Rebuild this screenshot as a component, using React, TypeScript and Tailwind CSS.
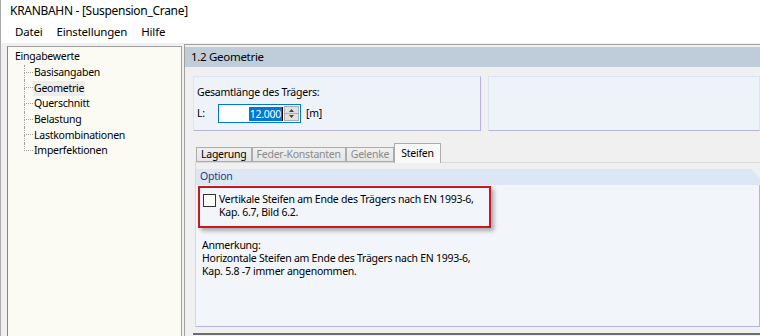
import { useState } from 'react';

const treeItems = ['Basisangaben', 'Geometrie', 'Querschnitt', 'Belastung', 'Lastkombinationen', 'Imperfektionen'];

function TreeRow({ label, last, selected }: { label: string; last: boolean; selected: boolean }) {
  return (
    <div className="flex h-[15.7px] items-stretch">
      <div className="ml-[16px] flex w-[9px] flex-col">
        <div className="h-1/2 border-b border-l border-dotted border-[#a0a0a0]" />
        <div className={last ? 'h-1/2' : 'h-1/2 border-l border-dotted border-[#a0a0a0]'} />
      </div>
      <div className="flex items-center">
        <span className={selected ? 'bg-[#ececec] px-[1px] leading-[15px]' : 'px-[1px] leading-[15px]'}>{label}</span>
      </div>
    </div>
  );
}

function Tab({ label, active, disabled }: { label: string; active?: boolean; disabled?: boolean }) {
  if (active) {
    return (
      <div className="relative z-10 -mb-px flex h-[20px] items-center border border-b-0 border-[#acacac] bg-[#f9f9f9] px-[6px]">
        {label}
      </div>
    );
  }
  return (
    <div
      className={
        'flex h-[15px] items-center border border-[#acacac] bg-gradient-to-b from-[#f0f0f0] to-[#e5e5e5] px-[4px] ' +
        (disabled ? 'text-[#8a8a8a]' : 'text-black')
      }
    >
      {label}
    </div>
  );
}

export default function App() {
  const [checked, setChecked] = useState(false);

  return (
    <div className="flex h-[336px] w-[760px] flex-col overflow-hidden border-l border-[#a9a9a9] bg-[#f0f0f0] font-['Noto_Sans',sans-serif] text-[10.5px] tracking-[-0.25px] text-black">
      <div className="flex h-[21px] items-center bg-white pl-[9px] text-[12px] tracking-[-0.3px]">KRANBAHN - [Suspension_Crane]</div>
      <div className="flex h-[22px] items-center gap-[14px] bg-white pl-[14px] text-[11.5px] tracking-[-0.2px]">
        <span>Datei</span>
        <span>Einstellungen</span>
        <span>Hilfe</span>
      </div>

      <div className="flex min-h-0 flex-1 pt-[1px]">
        {/* Navigator */}
        <div className="ml-[6px] mt-[2px] flex w-[175px] flex-col border-l border-r border-t border-l-[#5b8fc0] border-r-[#a0a0a0] border-t-[#a0a0a0] bg-[#fbfbf3] pt-[2px]">
          <div className="flex h-[15.7px] items-center pl-[7px]">Eingabewerte</div>
          {treeItems.map((t, i) => (
            <TreeRow key={t} label={t} last={i === treeItems.length - 1} selected={t === 'Geometrie'} />
          ))}
        </div>

        {/* Main panel */}
        <div className="ml-[2px] flex min-w-0 flex-1 flex-col border-l border-t border-[#a0a0a0]">
          <div className="mt-[2px] flex h-[20px] items-center bg-[#bfcddb] pl-[6px] text-[11.5px] tracking-[-0.3px]">1.2 Geometrie</div>

          <div className="flex gap-[7px] pl-[8px] pt-[9px]">
            <div className="flex h-[55px] w-[288px] flex-col border border-[#dce3f4] border-b-[#b4b4e8] border-r-[#b4b4e8] bg-[#eef2f9] pl-[3px] pt-[8px]">
              <div className="leading-[14px]">Gesamtlänge des Trägers:</div>
              <div className="mt-[5px] flex items-center">
                <span className="w-[21px]">L:</span>
                <div className="flex h-[19px] w-[83px] items-center border border-[#0078d7] bg-white pr-[1px]">
                  <div className="flex flex-1 justify-end">
                    <span className="bg-[#0078d7] px-[1px] leading-[14px] text-white">12.000</span>
                    <span className="w-px bg-black" />
                  </div>
                  <div className="ml-[1px] flex h-[15px] w-[15px] flex-col border border-[#adadad] bg-[#e1e1e1]">
                    <svg viewBox="0 0 13 6" className="h-[6.5px] w-[13px]">
                      <path d="M4 5 L6.5 2 L9 5 Z" fill="#404040" />
                    </svg>
                    <div className="h-px bg-[#adadad]" />
                    <svg viewBox="0 0 13 6" className="h-[6.5px] w-[13px]">
                      <path d="M4 1 L6.5 4 L9 1 Z" fill="#404040" />
                    </svg>
                  </div>
                </div>
                <span className="ml-[5px]">[m]</span>
              </div>
            </div>
            <div className="h-[55px] flex-1 border border-[#dce3f4] border-b-[#b4b4e8] bg-[#eef2f9]" />
          </div>

          {/* Tabs */}
          <div className="mt-[12px] flex items-end pl-[11px]">
            <Tab label="Lagerung" />
            <Tab label="Feder-Konstanten" disabled />
            <Tab label="Gelenke" disabled />
            <Tab label="Steifen" active />
          </div>

          <div className="ml-[10px] flex h-[165px] flex-col border-l border-t border-[#d9d9d9] pt-[6px]">
            <div className="flex h-[16px] items-center bg-[#dce6f4] pl-[4px] text-[#1f3f78] [clip-path:polygon(0_0,calc(100%-9px)_0,100%_9px,100%_100%,0_100%)]">
              Option
            </div>
            <div className="flex flex-1 flex-col border-b border-r border-[#b4b4e8] bg-[#f2f5fa] pl-[2px] pt-[1px]">
              <div className="flex h-[42px] w-[293px] items-start border-2 border-[#c8191f] pl-[3px] pt-[5px] shadow-[3px_3px_4px_rgba(0,0,0,0.3)]">
                <button
                  type="button"
                  onClick={() => setChecked(!checked)}
                  className="mt-[1px] flex h-[13px] w-[13px] shrink-0 items-center justify-center border border-[#333333] bg-white"
                >
                  {checked && (
                    <svg viewBox="0 0 10 10" className="h-[9px] w-[9px]">
                      <path d="M1.5 5 L4 7.5 L8.5 2" stroke="#000" strokeWidth="1.5" fill="none" />
                    </svg>
                  )}
                </button>
                <div className="ml-[3px] whitespace-nowrap leading-[13px]">
                  Vertikale Steifen am Ende des Trägers nach EN 1993-6,
                  <br />
                  Kap. 6.7, Bild 6.2.
                </div>
              </div>
              <div className="mt-[11px] whitespace-nowrap pl-[4px] leading-[13px]">
                <div>Anmerkung:</div>
                <div>Horizontale Steifen am Ende des Trägers nach EN 1993-6,</div>
                <div>Kap. 5.8 -7 immer angenommen.</div>
              </div>
            </div>
          </div>
          <div className="ml-[8px] mt-[6px] border-t-2 border-[#6d6d6d]" />
        </div>
      </div>
    </div>
  );
}
